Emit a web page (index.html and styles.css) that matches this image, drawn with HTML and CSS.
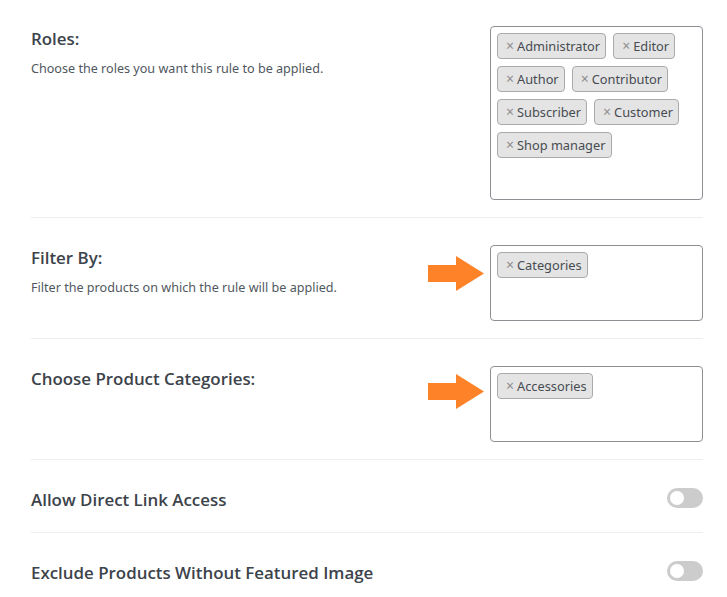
FILE: index.html
```html
<!DOCTYPE html>
<html>
<head>
<meta charset="utf-8">
<link rel="stylesheet" href="styles.css">
</head>
<body>
<div class="panel">
  <div class="row row-first">
    <div class="info">
      <div class="title">Roles:</div>
      <div class="desc">Choose the roles you want this rule to be applied.</div>
    </div>
    <div class="control">
      <div class="select select-tall">
        <span class="tag"><span class="x">×</span>Administrator</span>
        <span class="tag"><span class="x">×</span>Editor</span>
        <span class="tag"><span class="x">×</span>Author</span>
        <span class="tag"><span class="x">×</span>Contributor</span>
        <span class="tag"><span class="x">×</span>Subscriber</span>
        <span class="tag"><span class="x">×</span>Customer</span>
        <span class="tag"><span class="x">×</span>Shop manager</span>
      </div>
    </div>
  </div>
  <div class="row">
    <div class="info">
      <div class="title">Filter By:</div>
      <div class="desc">Filter the products on which the rule will be applied.</div>
    </div>
    <div class="control">
      <svg class="arrow" width="56" height="36" viewBox="0 0 56 36"><polygon points="0,9 28,9 28,0 56,17.5 28,35 28,26 0,26" fill="#fd8228"/></svg>
      <div class="select">
        <span class="tag"><span class="x">×</span>Categories</span>
      </div>
    </div>
  </div>
  <div class="row">
    <div class="info">
      <div class="title">Choose Product Categories:</div>
    </div>
    <div class="control">
      <svg class="arrow arrow-b" width="56" height="36" viewBox="0 0 56 36"><polygon points="0,9 28,9 28,0 56,17.5 28,35 28,26 0,26" fill="#fd8228"/></svg>
      <div class="select">
        <span class="tag"><span class="x">×</span>Accessories</span>
      </div>
    </div>
  </div>
  <div class="row row-toggle">
    <div class="info">
      <div class="title">Allow Direct Link Access</div>
    </div>
    <span class="toggle"><span class="knob"></span></span>
  </div>
  <div class="row row-toggle row-last">
    <div class="info">
      <div class="title">Exclude Products Without Featured Image</div>
    </div>
    <span class="toggle"><span class="knob"></span></span>
  </div>
</div>
</body>
</html>
```
FILE: styles.css
```css
html, body {
  margin: 0;
  padding: 0;
  background: #ffffff;
}
body {
  font-family: "Noto Sans", "Open Sans", sans-serif;
  color: #3c434a;
}
.panel {
  padding: 0 24px 0 31px;
}
.row {
  display: flex;
  justify-content: space-between;
  align-items: flex-start;
  padding: 27px 0 17px;
  border-bottom: 1px solid #ededed;
}
.row-first {
  padding-top: 26px;
}
.row-last {
  border-bottom: none;
}
.row-toggle {
  padding-bottom: 19px;
}
.title {
  font-family: "Open Sans", "Noto Sans", sans-serif;
  font-size: 16.9px;
  font-weight: 600;
  line-height: 26px;
  color: #3c434a;
}
.desc {
  margin-top: 7px;
  font-size: 12.6px;
  line-height: 20px;
  color: #50575e;
}
.control {
  position: relative;
}
.select {
  box-sizing: border-box;
  width: 213px;
  height: 76px;
  border: 1px solid #8c8f94;
  border-radius: 4px;
  padding: 6px;
  display: flex;
  flex-wrap: wrap;
  align-content: flex-start;
  gap: 7px;
}
.select-tall {
  height: 174px;
}
.tag {
  box-sizing: border-box;
  height: 26px;
  display: inline-flex;
  align-items: center;
  padding: 0 5px 0 8px;
  background: #e4e4e4;
  border: 1px solid #aaaaaa;
  border-radius: 4px;
  font-size: 12.8px;
  color: #474c52;
  line-height: 1;
}
.x {
  color: #8e8e8e;
  font-weight: 400;
  font-size: 14px;
  margin-right: 3px;
}
.arrow {
  position: absolute;
  left: -62px;
  top: 11px;
}
.arrow-b {
  top: 8px;
}
.toggle {
  position: relative;
  width: 36px;
  height: 20px;
  margin-top: 1px;
  border-radius: 10px;
  background: #cccccc;
  flex: none;
}
.knob {
  position: absolute;
  left: 3px;
  top: 3px;
  width: 14px;
  height: 14px;
  border-radius: 50%;
  background: #ffffff;
}
```
